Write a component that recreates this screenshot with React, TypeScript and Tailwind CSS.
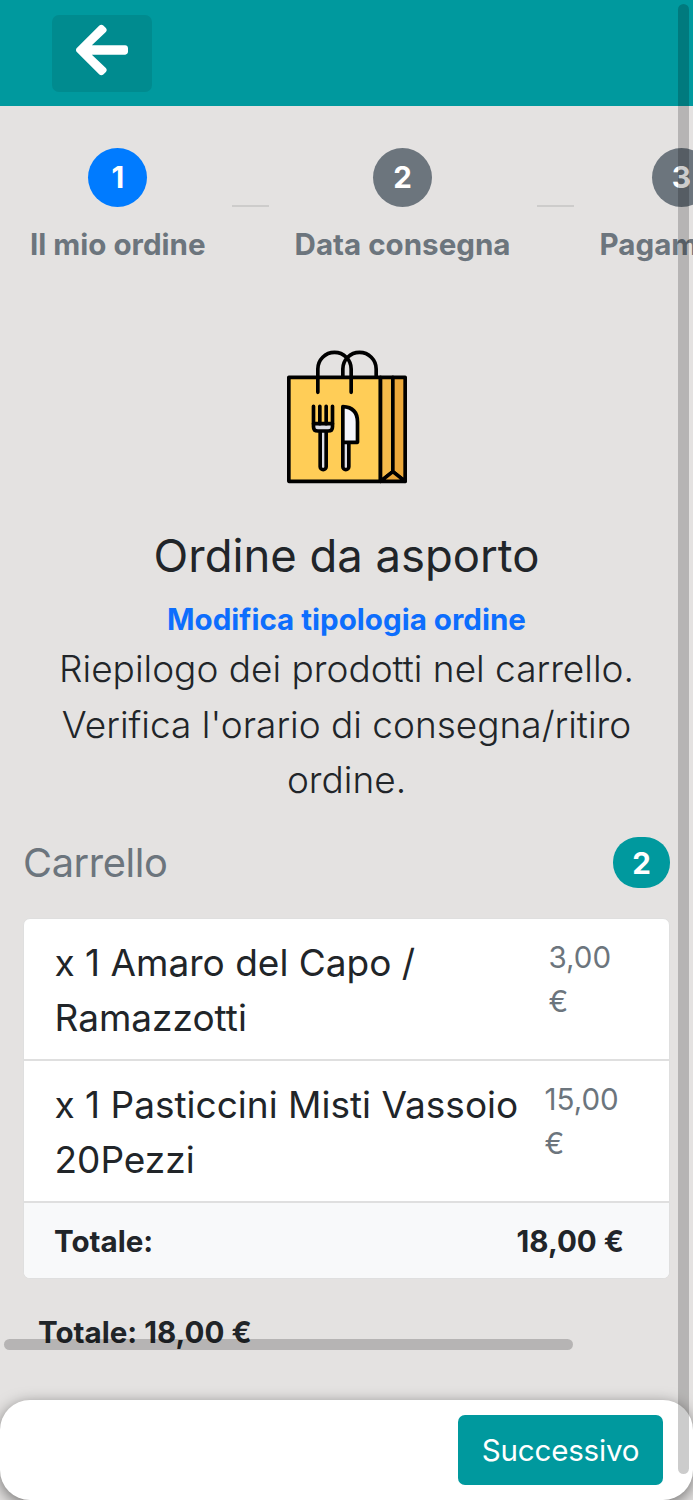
import { Fragment } from "react";
import { FaArrowLeft } from "react-icons/fa";

const steps = [
  { label: "Il mio ordine", active: true },
  { label: "Data consegna", active: false },
  { label: "Pagamento", active: false },
];

const items = [
  { name: "x 1 Amaro del Capo / Ramazzotti", price: "3,00 €", priceClass: "w-[90px] pr-[10px]" },
  { name: "x 1 Pasticcini Misti Vassoio 20Pezzi", price: "15,00 €", priceClass: "w-[94px]" },
];

function TakeawayBag() {
  return (
    <svg
      viewBox="59.5 60 402 402"
      className="h-[134px] w-[134px]"
      fill="none"
      stroke="#000"
      strokeWidth="11"
      strokeLinecap="round"
      strokeLinejoin="round"
    >
      <path d="M86 142H361V454H86Z" fill="#ffcd57" />
      <path d="M361 142H398V425L361 454Z" fill="#f5bb4b" />
      <path d="M398 142H435V454L398 425Z" fill="#eda93a" />
      <path d="M361 454L398 425L435 454Z" fill="#eda93a" />
      <path d="M173 187V117A50 50 0 0 1 273 117V187" />
      <path d="M248 137V117A50 50 0 0 1 348 117V137" />
      {/* fork */}
      <path d="M180 303V410A9 9 0 0 0 198 410V303" fill="#dcdde6" />
      <path d="M160 281H217V290Q217 303 204 303H173Q160 303 160 290Z" fill="#dcdde6" />
      <path d="M160 229V281M179 229V281M198 229V281M217 229V281" />
      {/* knife */}
      <path d="M248 337V410A9 9 0 0 0 266 410V337" fill="#dcdde6" />
      <path d="M248 230Q292 232 292 276V337H248Z" fill="#f5f5fc" />
    </svg>
  );
}

function Stepper() {
  return (
    <div className="flex w-max gap-[26px] pl-[30px] pt-[41.5px]">
      {steps.map((step, i) => (
        <Fragment key={step.label}>
          {i > 0 && <div className="mt-[57.5px] h-[2px] w-[37px] bg-[#cdcccb]" />}
          <div className="flex flex-col items-center gap-[15px]">
            <div
              className={`flex h-[59px] w-[59px] items-center justify-center rounded-full font-bold text-white ${
                step.active ? "bg-[#007bff]" : "bg-[#6c757d]"
              }`}
            >
              {i + 1}
            </div>
            <span className="font-bold text-[#6c757d]">{step.label}</span>
          </div>
        </Fragment>
      ))}
    </div>
  );
}

function Cart() {
  return (
    <section className="px-[23px] pt-[30px]">
      <div className="flex items-center justify-between">
        <h4 className="text-[39.8px] leading-[48px] tracking-[-0.4px] text-[#6c757d]">Carrello</h4>
        <span className="flex h-[51px] w-[57px] items-center justify-center rounded-[25px] bg-[#00999e] font-bold text-white">
          {items.length}
        </span>
      </div>
      <ul className="mt-[30px] overflow-hidden rounded-[7px] border border-[#dfdfdf] bg-white">
        {items.map((item) => (
          <li
            key={item.name}
            className="flex h-[142px] justify-between border-b-2 border-[#dfdfdf] px-[30.5px] pt-[15.5px]"
          >
            <h6 className="w-[480px] text-[37px] leading-[55.4px]">{item.name}</h6>
            <span className={`${item.priceClass} text-[#6c757d]`}>{item.price}</span>
          </li>
        ))}
        <li className="flex h-[75px] items-center justify-between bg-[#f8f9fa] pl-[30px] pr-[45px] font-bold">
          <span>Totale:</span>
          <span>18,00 €</span>
        </li>
      </ul>
    </section>
  );
}

export default function App() {
  return (
    <div className="relative flex h-[1500px] w-[693px] flex-col overflow-hidden bg-[#e4e2e1] font-['Inter',sans-serif] text-[29.57px] leading-[44.35px] text-[#212529]">
      <header className="h-[106px] shrink-0 bg-[#00999e] pl-[52px] pt-[15px]">
        <button className="flex h-[77px] w-[100px] justify-center rounded-[7px] bg-[#008b8f] pt-[5px]">
          <FaArrowLeft className="h-[60px] w-[52px] text-white" />
        </button>
      </header>

      <main className="flex-1">
        <Stepper />
        <div className="flex flex-col items-center pt-[84px] text-center">
          <TakeawayBag />
          <h2 className="mt-[45px] text-[45.4px] leading-[54px]">Ordine da asporto</h2>
          <a className="mt-[14px] font-bold text-[#0d6efd]">Modifica tipologia ordine</a>
          <p className="w-[640px] text-[37px] font-light leading-[55.4px]">
            Riepilogo dei prodotti nel carrello. Verifica l'orario di consegna/ritiro ordine.
          </p>
        </div>
        <Cart />
        <p className="pl-[38px] pt-[31px] font-bold">Totale: 18,00 €</p>
      </main>

      <footer className="flex h-[100px] shrink-0 items-start justify-end rounded-[30px] bg-white pr-[30px] pt-[15px] shadow-[0_4px_15px_rgba(0,0,0,0.5)]">
        <button className="h-[70px] w-[205px] rounded-[7px] bg-[#00999e] tracking-[-0.2px] text-white">
          Successivo
        </button>
      </footer>

      {/* overlay scrollbars */}
      <div className="absolute left-[4px] top-[1339px] h-[11px] w-[569px] rounded-full bg-black/20" />
      <div className="absolute left-[678px] top-[4px] h-[1470px] w-[11px] rounded-full bg-black/20" />
    </div>
  );
}
